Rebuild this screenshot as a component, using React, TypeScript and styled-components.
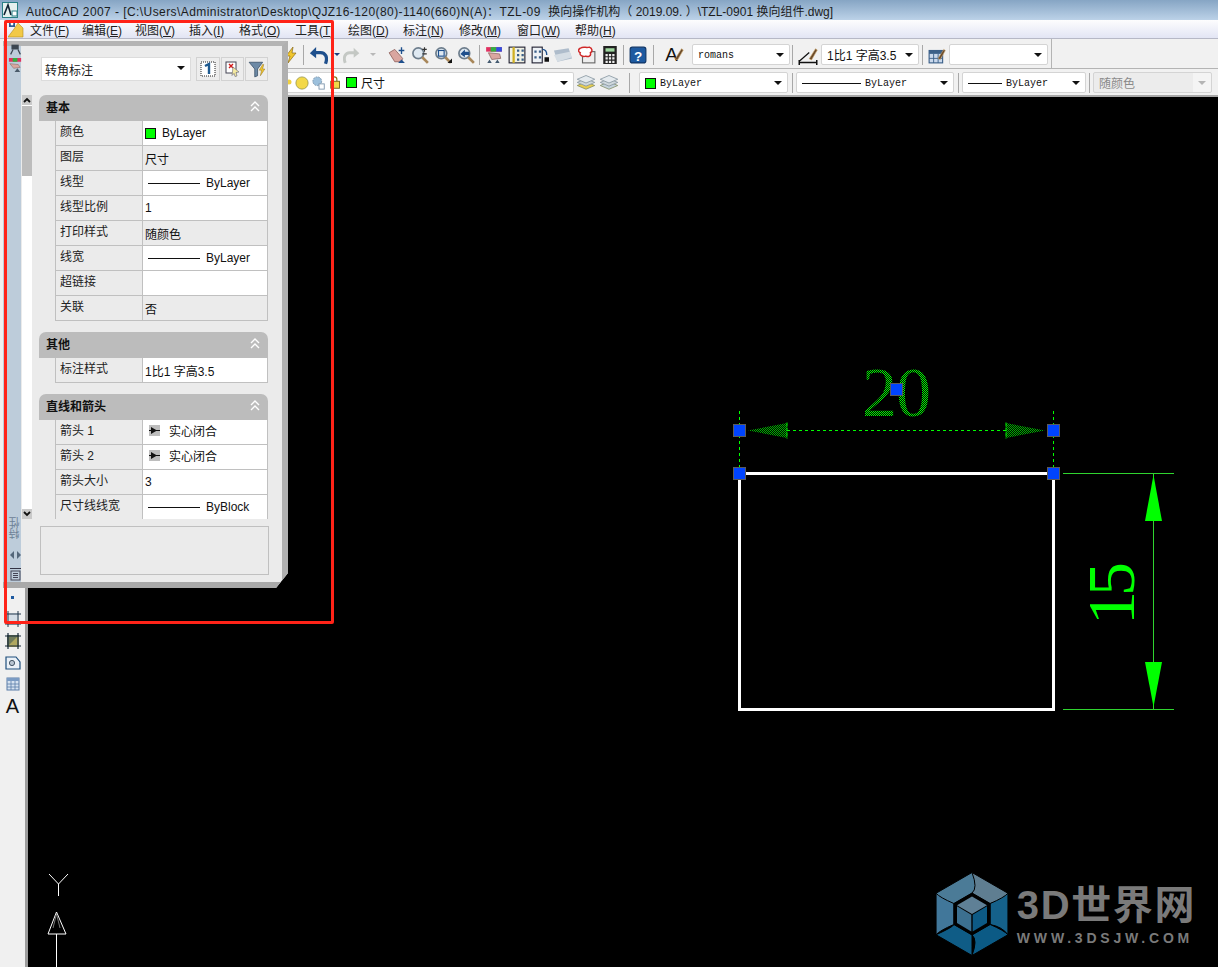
import React from 'react'
import styled, { createGlobalStyle } from 'styled-components'

const UI_FONT = `"Liberation Sans", "Noto Sans CJK SC", sans-serif`
const MONO_FONT = `"Liberation Mono", "Noto Sans CJK SC", monospace`

const Global = createGlobalStyle`
  html, body { margin: 0; padding: 0; height: 100%; overflow: hidden; background: #000; }
  #root { height: 100%; }
`

const Window = styled.div`
  position: relative;
  display: flex;
  flex-direction: column;
  height: 100vh;
  font-family: ${UI_FONT};
  font-size: 12px;
  color: #222;
`

const TitleBar = styled.div`
  display: flex;
  align-items: center;
  gap: 8px;
  height: 20px;
  padding-left: 2px;
  background: linear-gradient(#86a5c4, #bcd2e8);
  white-space: pre;
  color: #1c1c1c;
`

const TitlePath = styled.span`
  letter-spacing: 0.43px;
`

const MenuBar = styled.div`
  display: flex;
  align-items: center;
  height: 18px;
  padding-left: 8px;
  background: linear-gradient(#fdfdfe, #e2e5f4);
  border-bottom: 1px solid #b6b8c6;
`

const MenuLogo = styled.div`
  width: 22px;
  height: 17px;
`

const MenuItem = styled.span<{ $w: number }>`
  width: ${(p) => p.$w}px;
  white-space: nowrap;
  color: #222;
  u { text-decoration: underline; text-underline-offset: 1px; }
`

const ToolArea = styled.div`
  background: #f1f1f1;
`

const ToolRowOne = styled.div`
  display: flex;
  align-items: center;
  width: 1052px;
  height: 29px;
  box-sizing: border-box;
  padding: 2px 0 0 281px;
  border-right: 1px solid #b4b4b4;
`

const ToolRowTwo = styled.div`
  display: flex;
  align-items: center;
  height: 29px;
  box-sizing: border-box;
  margin-left: 3px;
  padding: 1px 0 0 277px;
  border-top: 1px solid #b4b4b4;
  border-bottom: 2px solid #a8a8a8;
`

const Tool = styled.div<{ $w?: number }>`
  display: flex;
  align-items: center;
  justify-content: center;
  flex: none;
  width: ${(p) => p.$w ?? 23}px;
  height: 21px;
`

const Sep = styled.div<{ $w?: number }>`
  flex: none;
  width: ${(p) => p.$w ?? 4}px;
  height: 20px;
  background: linear-gradient(#a8a8a8, #a8a8a8) center / 1px 100% no-repeat;
`

const Combo = styled.div<{ $w: number; $mono?: boolean; $off?: boolean }>`
  display: flex;
  align-items: center;
  flex: none;
  gap: 4px;
  box-sizing: border-box;
  width: ${(p) => p.$w}px;
  height: 21px;
  padding: ${(p) => (p.$mono ? '2px' : '0')} 14px 0 5px;
  background: ${(p) => (p.$off ? 'linear-gradient(to right, #ececec 85%, #f4f4f4 85%)' : '#fff')};
  border: 1px solid #d4d4d4;
  border-radius: 2px;
  position: relative;
  white-space: nowrap;
  font-family: ${(p) => (p.$mono ? MONO_FONT : UI_FONT)};
  font-size: ${(p) => (p.$mono ? '10px' : '12px')};
  color: ${(p) => (p.$off ? '#8a8a8a' : '#111')};
`

const ComboArrow = styled.i<{ $off?: boolean }>`
  position: absolute;
  right: 5px;
  top: 8px;
  border-style: solid;
  border-width: 4px 4px 0;
  border-color: ${(p) => (p.$off ? '#b4b4b4' : '#111')} transparent transparent;
`

const MiniArrow = styled.i<{ $off?: boolean }>`
  border-style: solid;
  border-width: 3px 3px 0;
  border-color: ${(p) => (p.$off ? '#b8b8b8' : '#1c3f7c')} transparent transparent;
`

const Swatch = styled.i`
  flex: none;
  width: 9px;
  height: 9px;
  background: #00ff00;
  border: 1px solid #111;
`

const LineSample = styled.i<{ $w: number; $inset?: number }>`
  flex: none;
  width: ${(p) => p.$w}px;
  height: 1px;
  margin-left: ${(p) => p.$inset ?? 0}px;
  background: #111;
`

const Workspace = styled.div`
  display: flex;
  flex: 1;
  min-height: 0;
`

const LeftBar = styled.div`
  display: flex;
  flex-direction: column;
  align-items: center;
  flex: none;
  width: 25px;
  box-sizing: content-box;
  padding-top: 490px;
  background: #f0f0f0;
  border-right: 3px solid #9c9c9c;
`

const LeftSlot = styled.div`
  display: flex;
  align-items: center;
  justify-content: center;
  height: 21.6px;
  width: 100%;
`

const LetterTool = styled.span`
  font-size: 20px;
  line-height: 1;
  color: #111;
`

const Canvas = styled.div`
  position: relative;
  flex: 1;
  background: #000;
  svg { display: block; }
`

const Logo = styled.div`
  position: absolute;
  right: 22px;
  bottom: 11px;
  display: flex;
  align-items: center;
  gap: 9px;
`

const LogoWords = styled.div`
  display: flex;
  flex-direction: column;
  gap: 4px;
  color: #7a7a7a;
`

const LogoName = styled.div`
  font-size: 40px;
  line-height: 44px;
  font-weight: 700;
  letter-spacing: 1.6px;
  white-space: nowrap;
`

const LogoUrl = styled.div`
  font-size: 14px;
  line-height: 14px;
  font-weight: 700;
  letter-spacing: 3.8px;
  white-space: nowrap;
`

const Palette = styled.div`
  position: absolute;
  left: 3px;
  top: 41px;
  display: flex;
  width: 285px;
  height: 547px;
  box-sizing: border-box;
  border-top: 5px solid #b4b4b4;
  border-right: 6px solid #b0b0b0;
  border-bottom: 6px solid #a9a9a9;
  background: #ebebeb;
  clip-path: polygon(0 0, 100% 0, 100% 532px, 273px 100%, 0 100%);
`

const SideStrip = styled.div`
  display: flex;
  flex-direction: column;
  align-items: center;
  flex: none;
  width: 18px;
  background: #bdccda;
`

const SideIcons = styled.div`
  display: flex;
  flex-direction: column;
  align-items: center;
  gap: 2px;
  margin-left: 6px;
  margin-top: -3px;
`

const SideLabel = styled.div`
  margin: auto 0 0 6px;
  writing-mode: vertical-rl;
  transform: rotate(180deg);
  color: #6d8196;
  font-size: 11px;
  line-height: 12px;
`

const SideFoot = styled.div`
  display: flex;
  flex-direction: column;
  align-items: center;
  gap: 9px;
  margin: 12px 0 1px 6px;
`

const PaletteBody = styled.div`
  flex: 1;
  min-width: 0;
  display: flex;
  flex-direction: column;
`

const PaletteHead = styled.div`
  display: flex;
  align-items: center;
  height: 24px;
  margin: 11px 0 14px 20px;
`

const TypeCombo = styled.div`
  position: relative;
  display: flex;
  align-items: center;
  box-sizing: border-box;
  width: 150px;
  height: 24px;
  margin-right: 5px;
  padding-left: 3px;
  background: #fff;
  border: 1px solid #dcdcdc;
`

const HeadButton = styled.div<{ $w: number }>`
  display: flex;
  align-items: center;
  justify-content: center;
  box-sizing: border-box;
  width: ${(p) => p.$w}px;
  height: 24px;
  margin-right: 1px;
  border: 1px solid #d2d2d2;
  background: #ededed;
`

const PaletteMain = styled.div`
  display: flex;
  height: 424px;
`

const ScrollBar = styled.div`
  display: flex;
  flex-direction: column;
  flex: none;
  width: 10px;
  margin: 0 7px 0 1px;
  background: #fff;
`

const ScrollButton = styled.div`
  display: flex;
  align-items: center;
  justify-content: center;
  flex: none;
  height: 10px;
  background: #c9c9c9;
`

const ScrollThumb = styled.div`
  height: 70px;
  margin-top: 1px;
  background: #bcbcbc;
`

const ScrollTrack = styled.div`
  flex: 1;
`

const SectionList = styled.div`
  display: flex;
  flex-direction: column;
  gap: 11px;
  width: 229px;
  overflow: hidden;
`

const SectionHead = styled.div`
  display: flex;
  align-items: center;
  justify-content: space-between;
  flex: none;
  height: 26px;
  padding: 0 7px 4px;
  box-sizing: border-box;
  background: #bcbcbc;
  border-radius: 7px 7px 0 0;
  font-weight: 700;
  color: #111;
`

const Row = styled.div`
  display: grid;
  grid-template-columns: 87px 125px;
  height: 25px;
  box-sizing: border-box;
  margin-left: 16px;
  border-left: 1px solid #c0c0c0;
  border-bottom: 1px solid #c0c0c0;
`

const RowLabel = styled.div`
  padding: 1px 0 0 4px;
  line-height: 20px;
  border-right: 1px solid #c0c0c0;
  white-space: nowrap;
  color: #222;
`

const RowValue = styled.div<{ $shade?: boolean; $raised?: boolean }>`
  display: flex;
  align-items: center;
  gap: 6px;
  padding: 0 0 ${(p) => (p.$raised ? '4px' : '0')} 2px;
  background: ${(p) => (p.$shade ? '#ebebeb' : '#fff')};
  border-right: 1px solid #c0c0c0;
  white-space: nowrap;
  color: #111;
`

const ArrowChip = styled.i`
  flex: none;
  width: 11px;
  height: 11px;
  margin: 0 3px 0 4px;
  background: #bdbdbd;
  display: flex;
  align-items: center;
  justify-content: center;
`

const DescBox = styled.div`
  width: 229px;
  height: 49px;
  box-sizing: border-box;
  margin: 7px 0 0 19px;
  border: 1px solid #c0c0c0;
`

const Annotation = styled.div`
  position: absolute;
  left: 4px;
  top: 20px;
  width: 330px;
  height: 604px;
  box-sizing: border-box;
  border: 3px solid #ff2318;
  border-radius: 2px;
  pointer-events: none;
`

type Kind = 'text' | 'color' | 'line' | 'arrow'
type Prop = { label: string; value: string; kind?: Kind; shade?: boolean }

const sections: { title: string; rows: Prop[] }[] = [
  {
    title: '基本',
    rows: [
      { label: '颜色', value: 'ByLayer', kind: 'color' },
      { label: '图层', value: '尺寸', shade: true },
      { label: '线型', value: 'ByLayer', kind: 'line' },
      { label: '线型比例', value: '1' },
      { label: '打印样式', value: '随颜色', shade: true },
      { label: '线宽', value: 'ByLayer', kind: 'line' },
      { label: '超链接', value: '' },
      { label: '关联', value: '否', shade: true },
    ],
  },
  { title: '其他', rows: [{ label: '标注样式', value: '1比1 字高3.5' }] },
  {
    title: '直线和箭头',
    rows: [
      { label: '箭头 1', value: '实心闭合', kind: 'arrow' },
      { label: '箭头 2', value: '实心闭合', kind: 'arrow' },
      { label: '箭头大小', value: '3' },
      { label: '尺寸线线宽', value: 'ByBlock', kind: 'line' },
    ],
  },
]

const menus: [string, string, number][] = [
  ['文件', 'F', 52],
  ['编辑', 'E', 53],
  ['视图', 'V', 54],
  ['插入', 'I', 50],
  ['格式', 'O', 56],
  ['工具', 'T', 53],
  ['绘图', 'D', 55],
  ['标注', 'N', 56],
  ['修改', 'M', 58],
  ['窗口', 'W', 58],
  ['帮助', 'H', 50],
]

const Icon = ({ s = 16, children }: { s?: number; children: React.ReactNode }) => (
  <svg width={s} height={s} viewBox="0 0 16 16">
    {children}
  </svg>
)

const Magnifier = ({ mark }: { mark: React.ReactNode }) => (
  <Icon s={18}>
    <circle cx="6.5" cy="6.5" r="4.8" fill="#dfe9f2" stroke="#6d7d8c" strokeWidth="1.5" />
    <path d="M10 10l5 5" stroke="#a8875a" strokeWidth="2.4" />
    {mark}
  </Icon>
)

const LayerStack = ({ accent }: { accent: string }) => (
  <Icon s={20}>
    <path d="M8 7l7 3-7 3-7-3z" fill={accent} stroke="#7d8b60" strokeWidth=".6" />
    <path d="M8 4.5l7 3-7 3-7-3z" fill="#cfd8dc" stroke="#7f8f9a" strokeWidth=".6" />
    <path d="M8 2l7 3-7 3-7-3z" fill="#e4eaee" stroke="#7f8f9a" strokeWidth=".6" />
  </Icon>
)

const Brush = () => <path d="M9 11l5-8 1.4 1-4.6 8z" fill="#6a4a2a" stroke="#c9a36a" strokeWidth=".5" />

const ToolbarOne = () => (
  <ToolRowOne>
    <Tool $w={20}>
      <Icon>
        <path d="M10 0L3 9h4l-2 7 8-10H9z" fill="#f0c62e" stroke="#8a6a18" strokeWidth=".7" />
      </Icon>
    </Tool>
    <Sep />
    <Tool $w={26}>
      <Icon s={20}>
        <path d="M14 15c2-5 0-9-4-9H5" fill="none" stroke="#1e4f8c" strokeWidth="2.6" />
        <path d="M6.5 1.5L1.5 6.5l5 4z" fill="#1e4f8c" />
      </Icon>
    </Tool>
    <Tool $w={12}>
      <MiniArrow />
    </Tool>
    <Tool $w={18}>
      <Icon s={20}>
        <path d="M2 15c-2-5 0-9 4-9h5" fill="none" stroke="#c4c8c4" strokeWidth="2.6" />
        <path d="M9.5 1.5l5 5-5 4z" fill="#c4c8c4" />
      </Icon>
    </Tool>
    <Tool $w={24}>
      <MiniArrow $off />
    </Tool>
    <Tool>
      <Icon s={18}>
        <path d="M1 6l5 8h6l1-3-7-8z" fill="#d9a6a0" stroke="#8a5a55" strokeWidth=".7" />
        <path d="M9 15l3-3 3 3z" fill="#1e4f8c" />
        <path d="M12 1v6M9.5 4h5" stroke="#1e4f8c" strokeWidth="1.2" />
      </Icon>
    </Tool>
    <Tool>
      <Magnifier mark={<path d="M12 1v4M10 3h4M10 7h4" stroke="#333" strokeWidth="1" />} />
    </Tool>
    <Tool>
      <Magnifier mark={<><rect x="4" y="4" width="5" height="5" fill="none" stroke="#1e4f8c" /><path d="M12 15h4v-4z" fill="#111" /></>} />
    </Tool>
    <Tool>
      <Magnifier mark={<path d="M3 7l4-4v2h4v3H7v2z" fill="#1e4f8c" />} />
    </Tool>
    <Sep $w={5} />
    <Tool>
      <Icon s={18}>
        <rect x="1" y="1" width="14" height="4" fill="#e03060" />
        <rect x="5" y="1" width="5" height="4" fill="#30b040" />
        <rect x="10" y="1" width="5" height="4" fill="#3050e0" />
        <path d="M3 6l10 1 1 4-8 1z" fill="#d9a6a0" stroke="#7d5a55" strokeWidth=".6" />
        <path d="M2 15l2-3 2 3zM9 15l2-3 2 3z" fill="#445a70" />
      </Icon>
    </Tool>
    <Tool>
      <Icon s={18}>
        <rect x="1" y="1" width="14" height="14" fill="#f2f2e4" stroke="#223" strokeWidth="1" />
        <path d="M5 1v14" stroke="#d0b020" strokeWidth="2" />
        <path d="M8 3h2v2H8zM12 3h2v2h-2zM8 7h2v2H8zM12 7h2v2h-2zM8 11h2v2H8zM12 11h2v2h-2z" fill="#3a5f88" />
      </Icon>
    </Tool>
    <Tool>
      <Icon s={18}>
        <rect x="1" y="1" width="9" height="14" fill="#eef2f6" stroke="#223" />
        <path d="M3 4h2v2H3zM7 4h2v2H7zM3 9h2v2H3zM7 9h2v2H7z" fill="#3a5f88" />
        <path d="M10 3c3 0 4 2 4 5" fill="none" stroke="#1e4f8c" strokeWidth="1.2" />
        <path d="M12 10h4v4h-4z" fill="#111" />
      </Icon>
    </Tool>
    <Tool $w={24}>
      <Icon s={18}>
        <path d="M0 4l13-2 3 9-13 3z" fill="#aebccb" />
        <path d="M0 8l14-3 2 5-13 4z" fill="#d5dde4" />
      </Icon>
    </Tool>
    <Tool>
      <Icon s={18}>
        <rect x="4" y="5" width="11" height="10" fill="#eee" stroke="#666" />
        <path d="M2 2c3-2 5 0 8-1 3 1 3 4 1 5 1 3-2 4-4 3-3 1-6-1-5-3-2-1-2-3 0-4z" fill="#fff" stroke="#d02828" strokeWidth="1.3" />
      </Icon>
    </Tool>
    <Tool>
      <Icon s={18}>
        <rect x="2" y="0" width="12" height="16" fill="#222" />
        <rect x="4" y="2" width="8" height="3" fill="#9fd8a0" />
        <path d="M4 7h2v2H4zM7 7h2v2H7zM10 7h2v2h-2zM4 10h2v2H4zM7 10h2v2H7zM10 10h2v2h-2zM4 13h2v2H4zM7 13h2v2H7zM10 13h2v2h-2z" fill="#eee" />
      </Icon>
    </Tool>
    <Sep />
    <Tool $w={26}>
      <Icon s={18}>
        <rect x="1" y="1" width="14" height="14" rx="2" fill="#1e5aa0" stroke="#0f3566" />
        <text x="8" y="13" textAnchor="middle" fontFamily={UI_FONT} fontWeight="700" fontSize="12" fill="#fff">?</text>
      </Icon>
    </Tool>
    <Sep />
    <Tool $w={37}>
      <Icon s={20}>
        <text x="1" y="13" fontFamily={UI_FONT} fontSize="15" fill="#111">A</text>
        <Brush />
      </Icon>
    </Tool>
    <Combo $w={98} $mono>
      romans
      <ComboArrow />
    </Combo>
    <Sep $w={5} />
    <Tool $w={26}>
      <Icon s={20}>
        <path d="M1 14h14M1 12v4M15 12v4" stroke="#111" strokeWidth="1.2" />
        <path d="M1 13L9 6" stroke="#111" />
        <Brush />
      </Icon>
    </Tool>
    <Combo $w={98}>
      1比1 字高3.5
      <ComboArrow />
    </Combo>
    <Sep $w={6} />
    <Tool $w={24}>
      <Icon s={18}>
        <rect x="1" y="4" width="12" height="11" fill="#c9d8ec" stroke="#3a5f88" />
        <path d="M1 4h12v3H1z" fill="#3a5f88" />
        <path d="M5 7v8M9 7v8M1 11h12" stroke="#3a5f88" strokeWidth=".8" />
        <Brush />
      </Icon>
    </Tool>
    <Combo $w={99}>
      <ComboArrow />
    </Combo>
  </ToolRowOne>
)

const LayerCombo = styled(Combo)`
  border-left: none;
  padding-left: 7px;
  gap: 3px;
`

const LayerName = styled.span`
  margin-left: 1px;
`

const ToolbarTwo = () => (
  <ToolRowTwo>
    <LayerCombo $w={294}>
      <svg width="5" height="14" viewBox="0 0 5 14">
        <circle cx="2" cy="6" r="2.5" fill="#f0d040" />
      </svg>
      <Icon s={14}>
        <circle cx="8" cy="8" r="7" fill="#f3d848" stroke="#8a8a40" strokeWidth=".8" />
      </Icon>
      <Icon s={14}>
        <circle cx="6" cy="6" r="5" fill="#9cc0dc" stroke="#7a93aa" strokeDasharray="2 1" />
        <rect x="8" y="9" width="6" height="6" fill="#fff" stroke="#7a93aa" />
      </Icon>
      <Icon s={14}>
        <path d="M3 6V4a3 3 0 016 0v2" fill="none" stroke="#8a7a20" strokeWidth="1.4" />
        <rect x="2" y="6" width="10" height="8" fill="#f0d848" stroke="#6a5a10" />
      </Icon>
      <Swatch />
      <LayerName>尺寸</LayerName>
      <ComboArrow />
    </LayerCombo>
    <Tool>
      <LayerStack accent="#e8cc50" />
    </Tool>
    <Tool>
      <LayerStack accent="#c4d2dc" />
    </Tool>
    <Sep $w={19} />
    <Combo $w={149} $mono>
      <Swatch />
      ByLayer
      <ComboArrow />
    </Combo>
    <Sep $w={8} />
    <Combo $w={158} $mono>
      <LineSample $w={59} />
      ByLayer
      <ComboArrow />
    </Combo>
    <Sep $w={8} />
    <Combo $w={124} $mono>
      <LineSample $w={34} />
      ByLayer
      <ComboArrow />
    </Combo>
    <Sep $w={7} />
    <Combo $w={119} $off>
      随颜色
      <ComboArrow $off />
    </Combo>
  </ToolRowTwo>
)

const hexPoint = (r: number, i: number) => {
  const a = (Math.PI / 3) * i - Math.PI / 2
  return [r * Math.cos(a), r * Math.sin(a)]
}

const bladeColors = ['#5f7e91', '#15618a', '#0b5a85', '#0f5c86', '#41779a', '#4b7b97']

const LogoMark = () => {
  const blades = bladeColors.map((c, i) => {
    const [ax, ay] = hexPoint(41.5, i)
    const [bx, by] = hexPoint(41.5, i + 1)
    const [ix, iy] = hexPoint(21, i + 1)
    const [jx, jy] = hexPoint(21, i)
    return (
      <path
        key={c + i}
        d={`M${ax} ${ay}L${bx} ${by}Q${bx * 0.68 + 6} ${by * 0.62} ${ix} ${iy}L${jx} ${jy}Q${ax * 0.9} ${ay * 0.8} ${ax} ${ay}Z`}
        fill={c}
        stroke="#000"
        strokeWidth="1"
      />
    )
  })
  return (
    <svg width="72" height="84" viewBox="-36 -42 72 84">
      {blades}
      <path d="M0-21L18.2-10.5v21L0 21-18.2 10.5v-21z" fill="#000" />
      <path d="M0-17.5L15-8.7 0 0-15-8.7z" fill="#5f8096" />
      <path d="M-15-7.7L-.7.7V17.5L-15 9z" fill="#3c7090" />
      <path d="M15-7.7L.7.7V17.5L15 9z" fill="#0d5a85" />
    </svg>
  )
}

const GRIPS: [number, number][] = [
  [739.5, 430.5],
  [1053.5, 430.5],
  [739.5, 473.5],
  [1053.5, 473.5],
  [896.5, 389.5],
]

const Drawing = () => (
  <svg width="1190" height="870" viewBox="28 97 1190 870">
    <defs>
      <pattern id="dither" width="2" height="2" patternUnits="userSpaceOnUse">
        <rect width="1" height="1" fill="#00ff00" shapeRendering="crispEdges" />
        <rect x="1" y="1" width="1" height="1" fill="#00ff00" shapeRendering="crispEdges" />
      </pattern>
    </defs>
    <path d="M739.5 411V467M1053.5 411V467M787 430.5H1006" stroke="#00ff00" strokeDasharray="3 3" fill="none" />
    <path d="M748 430.5L787 423V438Z" fill="url(#dither)" fillOpacity=".7" />
    <path d="M787 422.5V438.5M1006 422.5V438.5" stroke="#00ff00" strokeDasharray="4 1" />
    <path d="M1045 430.5L1006 423V438Z" fill="url(#dither)" fillOpacity=".7" />
    <text x="862" y="416" fontFamily="'Liberation Serif', serif" fontSize="70" letterSpacing="-1" fill="url(#dither)">20</text>
    <rect x="739.5" y="473.5" width="314" height="236" fill="none" stroke="#fff" strokeWidth="3" />
    <path d="M1063 473.5H1174M1063 709.5H1174M1153.5 473V710" stroke="#2fd42f" />
    <path d="M1153.5 475L1162 521H1145Z" fill="#00ff00" />
    <path d="M1153.5 707L1162 662H1145Z" fill="#00ff00" />
    <text transform="translate(1134 625) rotate(-90)" fontFamily="'Liberation Serif', serif" fontSize="68" letterSpacing="-5" fill="#00ff00">15</text>
    {GRIPS.map(([x, y]) => (
      <rect key={`${x}-${y}`} x={x - 6} y={y - 6} width="12" height="12" fill="#0044ff" stroke="#5a5a5a" />
    ))}
    <path d="M49 874L58.5 884L68 874M58.5 884V896" fill="none" stroke="#fff" />
    <path d="M56.5 912L48 934H66Z" fill="none" stroke="#fff" />
    <path d="M53 928L56.5 914L60 928" fill="none" stroke="#777" />
    <path d="M56.5 934V967" stroke="#fff" />
  </svg>
)

const LeftTools = () => (
  <LeftBar>
    <LeftSlot>
      <svg width="3" height="3">
        <rect width="3" height="3" fill="#1e5aa0" />
      </svg>
    </LeftSlot>
    <LeftSlot>
      <Icon>
        <rect x="2" y="2" width="12" height="12" fill="#d4dde6" />
        <path d="M0 3h16M0 13h16M3 0v16M13 0v16" stroke="#22364a" />
      </Icon>
    </LeftSlot>
    <LeftSlot>
      <Icon>
        <rect x="2" y="2" width="12" height="12" fill="#6f7a5a" />
        <path d="M2 14L14 2v12z" fill="#b0a860" />
        <path d="M0 3h16M0 13h16M3 0v16M13 0v16" stroke="#16283a" strokeWidth="1.2" />
      </Icon>
    </LeftSlot>
    <LeftSlot>
      <Icon>
        <path d="M1 2h10l4 5v7H1z" fill="#eaf0f6" stroke="#1e4f7c" strokeWidth="1.2" />
        <circle cx="7" cy="8" r="2.6" fill="#b8c4d0" stroke="#456" />
      </Icon>
    </LeftSlot>
    <LeftSlot>
      <Icon>
        <rect x="2" y="2" width="12" height="12" fill="#d6e2f0" stroke="#5a7da8" />
        <path d="M2 2h12v3H2z" fill="#7c9cc4" />
        <path d="M6 5v9M10 5v9M2 8h12M2 11h12" stroke="#5a7da8" strokeWidth=".8" />
      </Icon>
    </LeftSlot>
    <LeftSlot>
      <LetterTool>A</LetterTool>
    </LeftSlot>
  </LeftBar>
)

const Chevrons = () => (
  <svg width="12" height="11" viewBox="0 0 12 11">
    <path d="M2 5L6 1l4 4M2 10L6 6l4 4" fill="none" stroke="#fff" strokeWidth="1.4" />
  </svg>
)

const ScrollGlyph = ({ up }: { up?: boolean }) => (
  <svg width="8" height="6" viewBox="0 0 8 6">
    <path d={up ? 'M1 5l3-3 3 3' : 'M1 1l3 3 3-3'} fill="none" stroke="#111" strokeWidth="1.8" />
  </svg>
)

const PropValue = ({ row }: { row: Prop }) => {
  if (row.kind === 'color') {
    return (
      <>
        <Swatch />
        {row.value}
      </>
    )
  }
  if (row.kind === 'line') {
    return (
      <>
        <LineSample $w={52} $inset={3} />
        {row.value}
      </>
    )
  }
  if (row.kind === 'arrow') {
    return (
      <>
        <ArrowChip>
          <svg width="11" height="7" viewBox="0 0 11 7">
            <path d="M0 3.5h11" stroke="#111" />
            <path d="M2 0l6 3.5-6 3.5z" fill="#111" />
          </svg>
        </ArrowChip>
        {row.value}
      </>
    )
  }
  return <>{row.value}</>
}

const Properties = () => (
  <Palette>
    <SideStrip>
      <SideIcons>
        <Icon s={13}>
          <rect x="3" y="2" width="9" height="6" fill="#3c4650" />
          <path d="M2 14l3-6M14 14l-3-6" stroke="#3c4650" strokeWidth="1.5" />
        </Icon>
        <Icon s={15}>
          <rect x="1" y="0" width="13" height="4" fill="#e03060" />
          <rect x="5" y="0" width="5" height="4" fill="#30b040" />
          <path d="M2 6l9 1 2 3-7 1z" fill="#d9a6a0" stroke="#7d5a55" strokeWidth=".5" />
          <path d="M7 15l3-4 3 4z" fill="#4a5a6a" />
        </Icon>
      </SideIcons>
      <SideLabel>特性</SideLabel>
      <SideFoot>
        <svg width="11" height="8" viewBox="0 0 11 8">
          <path d="M4 0v8L0 4zM7 0v8l4-4z" fill="#55677a" />
        </svg>
        <svg width="11" height="13" viewBox="0 0 11 13">
          <path d="M0 .5h11" stroke="#334" />
          <rect x="1" y="3" width="9" height="9" fill="none" stroke="#445" />
          <path d="M3 5.5h5M3 7.5h5M3 9.5h5" stroke="#445" />
        </svg>
      </SideFoot>
    </SideStrip>
    <PaletteBody>
      <PaletteHead>
        <TypeCombo>
          转角标注
          <ComboArrow />
        </TypeCombo>
        <HeadButton $w={24}>
          <svg width="16" height="16" viewBox="0 0 16 16">
            <rect x="1" y="1" width="14" height="14" fill="#fff" stroke="#222" strokeDasharray="1 1" />
            <path d="M5 5l4-2v10" fill="none" stroke="#1e5a90" strokeWidth="2.4" />
          </svg>
        </HeadButton>
        <HeadButton $w={23}>
          <Icon>
            <rect x="1" y="1" width="10" height="11" fill="#fff" stroke="#445" />
            <path d="M4 3l4 4M8 3L4 7" stroke="#d01818" strokeWidth="1.4" />
            <path d="M8 6l6 5-3 .5 1 3.5-2 .5-1-3-2 2z" fill="#f4e9a0" stroke="#667" strokeWidth=".6" />
          </Icon>
        </HeadButton>
        <HeadButton $w={23}>
          <Icon s={18}>
            <path d="M1 2h12L8.5 8v6L6 15V8z" fill="#6d8aa6" stroke="#3a5068" strokeWidth=".7" />
            <path d="M13 4l-3 5h2l-1 5 4-6h-2l1-4z" fill="#f0c62e" stroke="#8a6a18" strokeWidth=".4" />
          </Icon>
        </HeadButton>
      </PaletteHead>
      <PaletteMain>
        <ScrollBar>
          <ScrollButton>
            <ScrollGlyph up />
          </ScrollButton>
          <ScrollThumb />
          <ScrollTrack />
          <ScrollButton>
            <ScrollGlyph />
          </ScrollButton>
        </ScrollBar>
        <SectionList>
          {sections.map((section) => (
            <div key={section.title}>
              <SectionHead>
                {section.title}
                <Chevrons />
              </SectionHead>
              {section.rows.map((row) => (
                <Row key={row.label}>
                  <RowLabel>{row.label}</RowLabel>
                  <RowValue $shade={row.shade} $raised={row.kind === 'arrow'}>
                    <PropValue row={row} />
                  </RowValue>
                </Row>
              ))}
            </div>
          ))}
        </SectionList>
      </PaletteMain>
      <DescBox />
    </PaletteBody>
  </Palette>
)

export default function App() {
  return (
    <>
      <Global />
      <Window>
        <TitleBar>
          <svg width="16" height="16" viewBox="0 0 16 16">
            <rect width="16" height="16" fill="#2a7f86" />
            <rect x="1" y="1" width="14" height="14" fill="#e6f0ee" />
            <path d="M2 13L6 3l3 10" fill="none" stroke="#123" strokeWidth="1.6" />
            <rect x="10" y="9" width="5" height="5" fill="#fff" stroke="#2a7f86" />
          </svg>
          <span>
            <TitlePath>{'AutoCAD 2007 - [C:\\Users\\Administrator\\Desktop\\QJZ16-120(80)-1140(660)N(A)：TZL-09  '}</TitlePath>
            {'换向操作机构（ 2019.09. ）\\TZL-0901 换向组件.dwg]'}
          </span>
        </TitleBar>
        <MenuBar>
          <MenuLogo>
            <svg width="16" height="17" viewBox="0 0 16 17">
              <path d="M0 16L6 8l4-6 5 5v9z" fill="#f2c948" stroke="#b08a20" strokeWidth=".6" />
              <path d="M1 1h6v5H1z" fill="#2f5c94" />
              <circle cx="4" cy="3" r="1.4" fill="#fff" />
            </svg>
          </MenuLogo>
          {menus.map(([name, key, w]) => (
            <MenuItem key={name} $w={w}>
              {name}(<u>{key}</u>)
            </MenuItem>
          ))}
        </MenuBar>
        <ToolArea>
          <ToolbarOne />
          <ToolbarTwo />
        </ToolArea>
        <Workspace>
          <LeftTools />
          <Canvas>
            <Drawing />
            <Logo>
              <LogoMark />
              <LogoWords>
                <LogoName>3D世界网</LogoName>
                <LogoUrl>WWW.3DSJW.COM</LogoUrl>
              </LogoWords>
            </Logo>
          </Canvas>
        </Workspace>
        <Properties />
        <Annotation />
      </Window>
    </>
  )
}
